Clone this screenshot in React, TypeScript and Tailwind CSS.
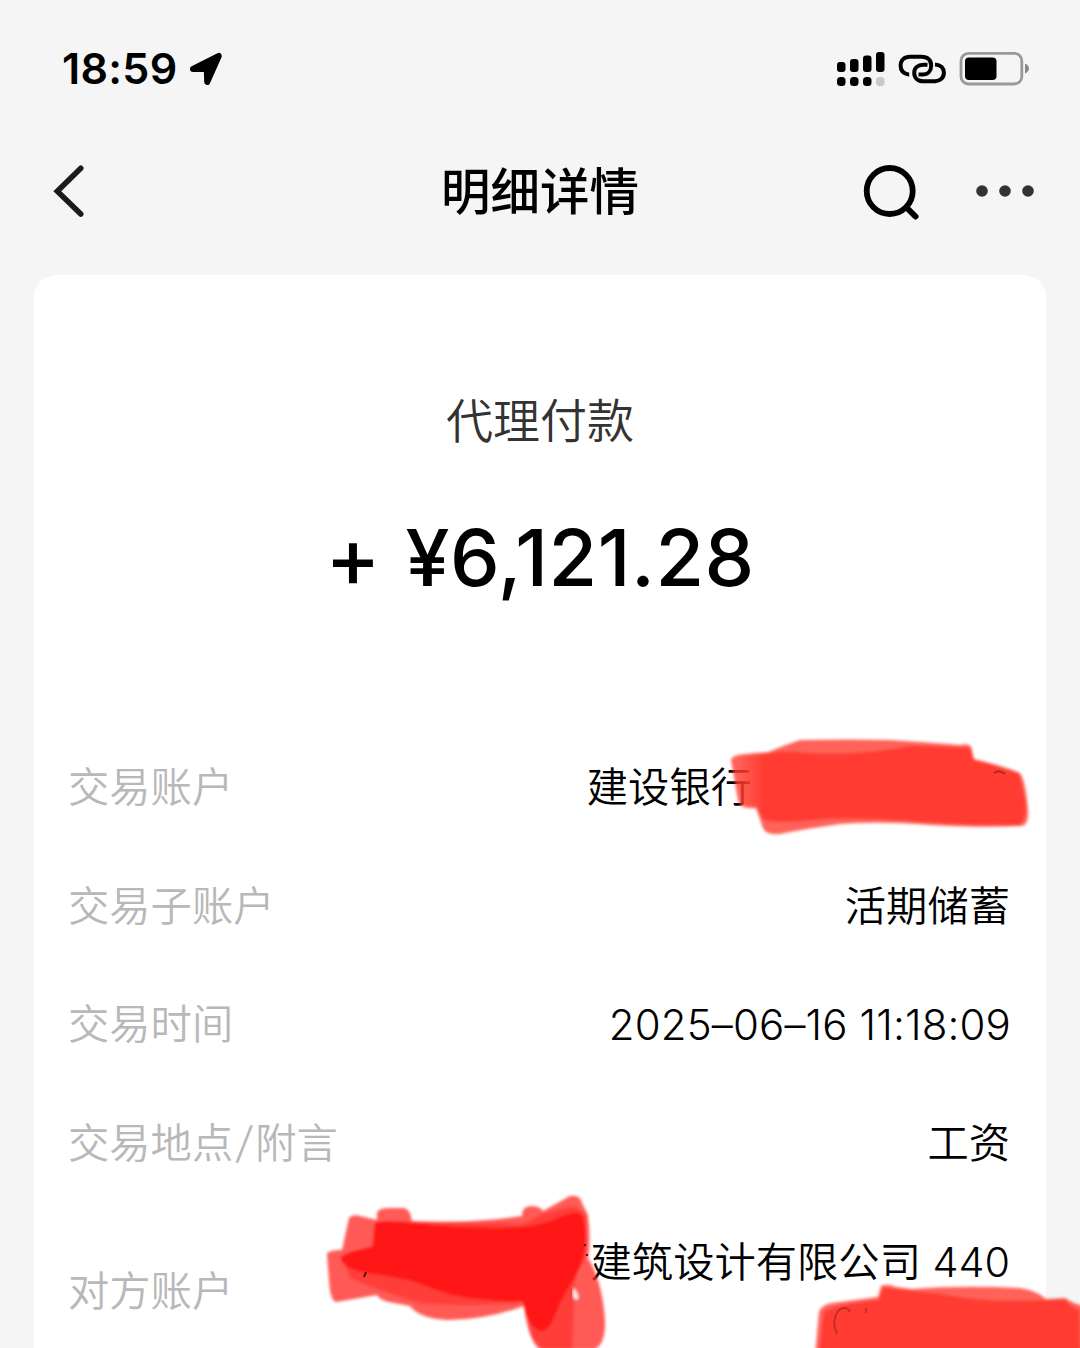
const details = [
  { label: "交易账户", value: "建设银行", masked: true },
  { label: "交易子账户", value: "活期储蓄" },
  { label: "交易时间", value: "2025–06–16 11:18:09", latin: true },
  { label: "交易地点/附言", value: "工资" },
];

const StatusBar = () => {
  return (
    <div className="flex h-[137px] items-center justify-between pl-[62px] pr-[50px]">
      <div className="flex items-center">
        <span className="font-['Inter'] text-[43px] font-semibold leading-none tracking-[0.3px]">
          18:59
        </span>
        <svg className="ml-3 h-[34px] w-[34px]" viewBox="0 0 34 34">
          <path
            d="M4 17 29.8 4 18.2 30 17.8 17Z"
            fill="black"
            stroke="black"
            strokeWidth="6"
            strokeLinejoin="round"
          />
        </svg>
      </div>
      <div className="flex items-center">
        <svg className="h-[36px] w-[48px]" viewBox="0 0 48 36">
          <rect x="0" y="11" width="8.5" height="10" rx="3" />
          <rect x="13" y="8" width="8.5" height="13" rx="3" />
          <rect x="26" y="4.5" width="8.5" height="16.5" rx="3" />
          <rect x="39" y="1" width="8.5" height="20" rx="3" />
          <rect x="0" y="26" width="8.5" height="9" rx="3.5" />
          <rect x="13" y="26" width="8.5" height="9" rx="3.5" />
          <rect x="26" y="26" width="8.5" height="9" rx="3.5" />
          <rect x="39" y="26" width="8.5" height="9" rx="3.5" fill="#c9c9c9" />
        </svg>
        <svg
          className="ml-[12px] h-[32px] w-[52px]"
          viewBox="0 0 52 32"
          fill="none"
          stroke="black"
          strokeWidth="4"
        >
          <path d="M12.2 21.6H11.6C6.2 20.8 3.6 17.2 3.6 12.6 3.6 7.1 7.4 3.8 13 3.8H24.4C30.8 3.8 34.2 7.2 34.2 12.4S31 21.6 25.6 21.6H21.5" />
          <path d="M38 11.4C43.8 11.7 46.9 15.2 46.9 19.8 46.9 24.8 43 28.3 38.2 28.3H26.5C20.8 28.3 17.2 24.8 17.2 19.8S20.8 11.8 26.3 11.8H30.5" />
        </svg>
        <svg className="ml-[10px] h-[34px] w-[71px]" viewBox="0 0 71 34">
          <rect x="2" y="1.4" width="60.8" height="30.6" rx="7.5" fill="none" stroke="#999" strokeWidth="2.8" />
          <rect x="6" y="5.4" width="31.5" height="22.5" rx="4" />
          <path d="M66 11.5Q70 13.5 70 16.5T66 21.5Z" fill="#888" />
        </svg>
      </div>
    </div>
  );
};

const NavBar = () => {
  return (
    <div className="flex h-[138px] items-start justify-between pl-[50px] pr-[46px] pt-[24px]">
      <button className="flex h-[60px] w-[176px] items-center">
        <svg className="h-[60px] w-[40px]" viewBox="0 0 40 60" fill="none" stroke="#1b1b1b" strokeWidth="5.5" strokeLinecap="round">
          <path d="M30.8 7.2 7.3 30.2 30.8 53" />
        </svg>
      </button>
      <h1 className="h-[60px] pt-px text-[49.5px] font-medium leading-[60px]">明细详情</h1>
      <div className="flex h-[60px] w-[180px] items-center justify-end">
        <svg className="h-[60px] w-[60px]" viewBox="0 0 60 60" fill="none" stroke="black">
          <circle cx="28.7" cy="30" r="23" strokeWidth="5.8" />
          <path d="m46.5 47.5 8 8" strokeWidth="6" strokeLinecap="round" />
        </svg>
        <svg className="ml-[55px] h-[12px] w-[58px]" viewBox="0 0 58 12" fill="#333">
          <circle cx="6" cy="6" r="5.8" />
          <circle cx="29" cy="6" r="5.8" />
          <circle cx="52" cy="6" r="5.8" />
        </svg>
      </div>
    </div>
  );
};

// Marker strokes drawn over the private parts of the record
const AccountMask = () => {
  return (
    <svg className="pointer-events-none absolute left-[695px] top-[455px] h-[115px] w-[305px]" viewBox="729 730 305 115">
      <defs>
        <filter id="soft" x="-5%" y="-10%" width="110%" height="120%">
          <feGaussianBlur stdDeviation="1.6" />
        </filter>
        <linearGradient id="edge" x1="738" x2="764" y1="0" y2="0" gradientUnits="userSpaceOnUse">
          <stop offset="0" stopColor="#ff3b30" stopOpacity="0" />
          <stop offset="1" stopColor="#ff3b30" />
        </linearGradient>
      </defs>
      <g filter="url(#soft)">
        <path
          d="M731 760Q732 755 745 754L768 752Q785 745 800 740Q850 739 890 740Q925 742 960 745Q971 742 972 750L974 759Q1000 765 1018 772Q1024 774 1027 800Q1031 824 1022 826Q980 828 930 825Q880 821 840 824Q805 829 785 833Q767 837 763 828L756 808Q740 810 738 800Z"
          fill="#ff3b30"
          opacity="0.8"
        />
        <path
          d="M736 757Q750 755 768 754Q785 750 804 753Q830 754 860 753Q890 750 910 746Q940 747 970 748L973 760Q1000 767 1019 774L1025 800Q1027 822 1018 825Q965 826 900 820Q850 817 820 819Q785 824 764 820L756 806L741 804Z"
          fill="url(#edge)"
        />
      </g>
      <path d="M994 773Q999 769 1005 774" fill="none" stroke="#8f241e" strokeWidth="1.8" opacity="0.7" />
    </svg>
  );
};

const CompanyMask = () => {
  return (
    <svg className="pointer-events-none absolute left-[286px] top-[905px] h-[168px] w-[300px]" viewBox="320 1180 300 168">
      <g filter="url(#soft)">
        <path
          d="M327 1254Q328 1250 342 1250L349 1218Q353 1213 364 1217L377 1220V1213Q378 1208 390 1208H404Q410 1209 412 1221Q470 1224 522 1216Q522 1206 531 1206Q540 1206 543 1211L570 1196Q580 1194 582 1203L588 1215Q591 1240 588 1258Q602 1280 605 1320Q606 1344 594 1350H540Q528 1340 524 1306Q485 1320 448 1320Q420 1319 410 1306L394 1303Q380 1301 377 1295L336 1302Q330 1300 329 1280Z"
          fill="#ff2d28"
          opacity="0.78"
        />
        <path
          d="M343 1258L376 1244V1222H410L524 1224L543 1214L574 1206L586 1215L586 1256L575 1276L572 1350H544L532 1338L525 1302Q480 1307 420 1303L380 1290L350 1278Z"
          fill="#ff2d28"
          opacity="0.65"
        />
        <path
          d="M341 1257Q350 1251 373 1247L375 1223Q385 1220 410 1223Q470 1230 523 1227Q545 1225 563 1216Q580 1209 583 1218Q588 1240 583 1258Q578 1274 568 1288Q558 1306 552 1322Q546 1332 540 1331Q527 1325 523 1301Q490 1302 453 1295Q430 1288 410 1280Q390 1276 363 1272Q342 1268 341 1257Z"
          fill="#ff1612"
        />
      </g>
      <path d="M573 1287Q577 1290 579 1297Q579 1300 575 1300Q571 1298 573 1287Z" fill="white" opacity="0.9" filter="url(#soft)" />
      <path d="M366 1272 364 1277M585 1244v2M587 1254v2" fill="none" stroke="#3b0b09" strokeWidth="1.8" />
    </svg>
  );
};

const NumberMask = () => {
  return (
    <svg className="pointer-events-none absolute left-[766px] top-[1000px] h-[73px] w-[280px]" viewBox="800 1275 280 73">
      <g filter="url(#soft)" fill="#ff3b30">
        <path d="M815 1355L819 1312Q821 1305 832 1303L878 1297L881 1286Q887 1283 896 1287L912 1289Q960 1285 1020 1288Q1038 1291 1046 1299L1065 1298Q1074 1304 1084 1306V1355Z" opacity="0.8" />
        <path d="M819 1355L824 1313Q830 1307 850 1304L879 1300L883 1288Q905 1290 940 1294Q980 1302 1020 1301L1065 1300Q1072 1308 1079 1310L1080 1355Z" />
      </g>
      <path d="M837 1334Q831 1321 838 1311Q846 1304 850 1312M866 1308v5" fill="none" stroke="#98251e" strokeWidth="1.8" opacity="0.6" />
    </svg>
  );
};

const Label = ({ text }: { text: string }) => {
  return (
    <span className="-ml-px text-[#b8b8b8]">
      {text.split("/").map((part, i) => (
        <span key={part}>
          {i > 0 && <span className="mx-[3.5px] inline-block skew-x-[-7deg] text-[43px] leading-none">/</span>}
          {part}
        </span>
      ))}
    </span>
  );
};

const App = () => {
  return (
    <div className="h-[1348px] w-[1080px] overflow-hidden bg-[#f5f5f5] font-['Inter','Noto_Sans_CJK_SC',sans-serif] text-black">
      <StatusBar />
      <NavBar />
      <main className="relative mx-[34px] h-[1200px] rounded-[22px] bg-white px-[35px]">
        <div className="flex flex-col items-center pt-[116px]">
          <span className="h-[60px] text-[47px] font-[350] leading-[60px] text-[#333]">代理付款</span>
          <div className="mt-[56px] flex h-[100px] items-center whitespace-pre text-[79px] font-medium leading-[100px]">
            <span className="mr-[25px] text-[83px] font-[450]">+</span>
            <span className="tracking-[0.5px]">¥6,121.28</span>
          </div>
        </div>
        <div className="mt-[122px] text-[41.3px] font-[350]">
          {details.map((item) => (
            <div key={item.label} className="flex h-[118.5px] items-center justify-between">
              <Label text={item.label} />
              <span className={item.masked ? "mr-[259px]" : item.latin ? "pb-[2px] text-[42px] tracking-[0.15px]" : "mr-px"}>
                {item.value}
              </span>
            </div>
          ))}
          <div className="flex h-[178px] items-center justify-between">
            <Label text="对方账户" />
            <div className="flex h-[118px] flex-col items-end leading-[59px]">
              <span className="mr-px">建筑设计有限公司 440</span>
            </div>
          </div>
        </div>
        <AccountMask />
        <CompanyMask />
      </main>
      <div className="relative mx-[34px] -mt-[1200px]">
        <NumberMask />
      </div>
    </div>
  );
};

export default App;
